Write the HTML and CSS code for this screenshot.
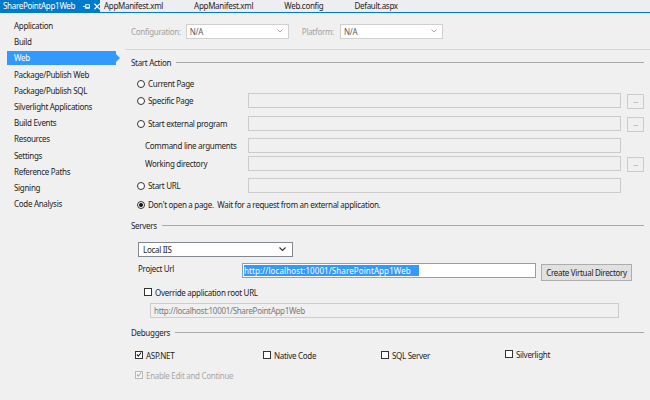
FILE: index.html
```html
<!DOCTYPE html>
<html>
<head>
<meta charset="utf-8">
<link rel="stylesheet" href="styles.css">
</head>
<body>
<div class="tabs">
  <div class="tab active">
    <span>SharePointApp1Web</span>
    <svg class="pin" width="8" height="7" viewBox="0 0 8 7"><path d="M0 3.5h3M3 1v5M3 1.5h4v4H3M3 4.5h4" fill="none" stroke="#fff" stroke-width="1"/></svg>
    <svg class="close" width="7" height="7" viewBox="0 0 7 7"><path d="M0.5 0.5l6 6M6.5 0.5l-6 6" stroke="#fff" stroke-width="1.3"/></svg>
  </div>
  <div class="tab">AppManifest.xml</div>
  <div class="tab">AppManifest.xml</div>
  <div class="tab">Web.config</div>
  <div class="tab">Default.aspx</div>
</div>
<div class="wrap">
  <nav class="side">
    <div class="item">Application</div>
    <div class="item">Build</div>
    <div class="item sel">Web</div>
    <div class="item">Package/Publish Web</div>
    <div class="item">Package/Publish SQL</div>
    <div class="item">Silverlight Applications</div>
    <div class="item">Build Events</div>
    <div class="item">Resources</div>
    <div class="item">Settings</div>
    <div class="item">Reference Paths</div>
    <div class="item">Signing</div>
    <div class="item">Code Analysis</div>
  </nav>
  <main class="main">
    <div class="cfg">
      <span class="dim">Configuration:</span>
      <div class="select cfg-sel"><span>N/A</span><svg width="6" height="4" viewBox="0 0 6 4"><path d="M0.5 0.5l2.5 2.5 2.5-2.5" fill="none" stroke="#a8a8a8"/></svg></div>
      <span class="dim plat">Platform:</span>
      <div class="select cfg-sel"><span>N/A</span><svg width="6" height="4" viewBox="0 0 6 4"><path d="M0.5 0.5l2.5 2.5 2.5-2.5" fill="none" stroke="#a8a8a8"/></svg></div>
    </div>
    <div class="content">
      <div class="head"><span>Start Action</span><i class="rule"></i></div>

      <div class="row mt8"><label class="opt"><i class="radio"></i>Current Page</label></div>
      <div class="row mt2"><label class="opt"><i class="radio"></i>Specific Page</label><div class="box"></div><div class="dots">...</div></div>
      <div class="row mt8"><label class="opt"><i class="radio"></i>Start external program</label><div class="box"></div><div class="dots">...</div></div>
      <div class="row mt7"><label class="sub">Command line arguments</label><div class="box"></div></div>
      <div class="row mt3"><label class="sub">Working directory</label><div class="box"></div><div class="dots">...</div></div>
      <div class="row mt7"><label class="opt"><i class="radio"></i>Start URL</label><div class="box"></div></div>
      <div class="row mt4"><label class="opt wide"><i class="radio on"></i>Don't open a page.&nbsp; Wait for a request from an external application.</label></div>

      <div class="head servers"><span>Servers</span><i class="rule"></i></div>
      <div class="select iis"><span>Local IIS</span><svg width="7" height="5" viewBox="0 0 7 5"><path d="M0.5 0.5l3 3 3-3" fill="none" stroke="#333" stroke-width="1.1"/></svg></div>
      <div class="url-row">
        <label class="url-label">Project Url</label>
        <div class="box live"><span class="selected">http://localhost:10001/SharePointApp1Web</span></div>
        <button class="btn">Create Virtual Directory</button>
      </div>
      <label class="check override"><i class="cb"></i>Override application root URL</label>
      <div class="box root">http://localhost:10001/SharePointApp1Web</div>

      <div class="head debug"><span>Debuggers</span><i class="rule"></i></div>
      <div class="dbg">
        <label class="check"><i class="cb on"><svg width="7" height="7" viewBox="0 0 7 7"><path d="M1 3.5l1.8 1.8L6 1.2" fill="none" stroke="#222" stroke-width="1.3"/></svg></i>ASP.NET</label>
        <label class="check"><i class="cb"></i>Native Code</label>
        <label class="check"><i class="cb"></i>SQL Server</label>
        <label class="check up"><i class="cb"></i>Silverlight</label>
      </div>
      <label class="check disabled edit"><i class="cb on"><svg width="7" height="7" viewBox="0 0 7 7"><path d="M1 3.5l1.8 1.8L6 1.2" fill="none" stroke="#b0b0b0" stroke-width="1.3"/></svg></i>Enable Edit and Continue</label>
    </div>
  </main>
</div>
</body>
</html>
```
FILE: styles.css
```css
* { box-sizing: border-box; }
html, body {
  margin: 0;
  padding: 0;
  width: 650px;
  height: 400px;
  overflow: hidden;
  background: #f0f0f0;
  font-family: "Segoe UI", "Noto Sans", sans-serif;
  font-size: 8px;
  letter-spacing: -0.3px;
  color: #1e1e1e;
}

/* tab strip */
.tabs {
  display: flex;
  height: 13px;
  border-bottom: 1px solid #007acc;
  background: #eeeef2;
}
.tab {
  display: flex;
  align-items: center;
  padding: 0 27px 0 4px;
  height: 12px;
  line-height: 12px;
  color: #1e1e1e;
  white-space: nowrap;
}
.tab.active {
  background: #007acc;
  color: #fff;
  padding: 0 0 0 3px;
  width: 100px;
}
.tab.active .pin { margin-left: 8px; }
.tab.active .close { margin-left: 3px; }

.wrap { display: flex; height: 387px; }

/* sidebar */
.side {
  width: 118px;
  flex: none;
  padding: 5px 0 0 7px;
}
.item {
  height: 16.2px;
  line-height: 16.2px;
  padding-left: 7px;
  width: 109px;
  white-space: nowrap;
  position: relative;
}
.item.sel {
  background: #3399ff;
  color: #fff;
  height: 14px;
  line-height: 14px;
  margin: 1px 0 1.2px;
}
.item.sel::after {
  content: "";
  position: absolute;
  right: -4px;
  top: 3px;
  border-left: 4px solid #3399ff;
  border-top: 4px solid transparent;
  border-bottom: 4px solid transparent;
}

/* main */
.main { flex: 1; }
.cfg {
  display: flex;
  align-items: center;
  height: 37px;
  padding: 11px 0 11px 6px;
  margin-left: 7px;
  border-bottom: 1px solid #d6d6d6;
}
.dim { color: #a2a2a2; margin-right: 5px; }
.plat { margin-left: 13px; margin-right: 6px; }
.select {
  display: flex;
  align-items: center;
  justify-content: space-between;
  height: 15px;
  background: #fff;
  border: 1px solid #cfcfcf;
  padding: 0 5px 0 3px;
}
.cfg-sel { width: 103px; color: #5a5a5a; }

.content { padding: 0 10px 0 13px; }
.head {
  display: flex;
  align-items: center;
  height: 12px;
  margin-top: 6px;
}
.head .rule {
  flex: 1;
  height: 1px;
  background: #a9a9a9;
  margin-left: 5px;
}
.head.servers { margin-top: 7px; }
.head.debug { margin-top: 8px; }

.row {
  display: grid;
  grid-template-columns: 105px 373px 17px;
  column-gap: 6px;
  height: 15px;
  margin-left: 6px;
  align-items: start;
}
.mt2 { margin-top: 2px; }
.mt3 { margin-top: 3px; }
.mt4 { margin-top: 4px; }
.mt7 { margin-top: 7px; }
.mt8 { margin-top: 8px; }

.opt {
  display: flex;
  align-items: center;
  height: 15px;
  white-space: nowrap;
}
.opt.wide { grid-column: 1 / 4; }
.sub {
  display: flex;
  align-items: center;
  height: 15px;
  padding-left: 8px;
  white-space: nowrap;
}
.radio {
  width: 8px;
  height: 8px;
  border: 1px solid #333;
  border-radius: 50%;
  background: #fff;
  margin-right: 3px;
  flex: none;
  position: relative;
}
.radio.on::after {
  content: "";
  position: absolute;
  left: 1px;
  top: 1px;
  width: 4px;
  height: 4px;
  border-radius: 50%;
  background: #111;
}
.box {
  height: 15px;
  border: 1px solid #cccccc;
  background: #f0f0f0;
}
.dots {
  height: 15px;
  margin-top: 1px;
  border: 1px solid #cccccc;
  background: #f0f0f0;
  color: #9a9a9a;
  font-size: 7px;
  text-align: center;
  line-height: 11px;
}

.iis {
  width: 155px;
  margin: 11px 0 0 7px;
  border-color: #828790;
  padding-left: 4px;
  padding-right: 6px;
}
.url-row {
  display: flex;
  align-items: flex-start;
  margin: 6px 0 0 7px;
  height: 18px;
}
.url-label {
  width: 104px;
  line-height: 12px;
}
.box.live {
  width: 294px;
  background: #fff;
  border-color: #7ea3c9;
  padding: 1px 1px;
  display: flex;
  align-items: center;
}
.selected {
  background: #3399ff;
  color: #fff;
  line-height: 11px;
  white-space: nowrap;
  letter-spacing: 0.1px;
  padding-right: 8px;
}
.btn {
  margin: 1px 0 0 5px;
  width: 91px;
  height: 17px;
  padding: 0;
  background: #e1e1e1;
  border: 1px solid #adadad;
  font: inherit;
  letter-spacing: inherit;
  color: #1e1e1e;
}

.check {
  display: flex;
  align-items: center;
  height: 12px;
  white-space: nowrap;
}
.cb {
  width: 8px;
  height: 8px;
  border: 1px solid #333;
  background: #fff;
  margin-right: 3px;
  flex: none;
  display: flex;
  align-items: center;
  justify-content: center;
}
.cb svg { margin-top: -1px; }
.override { margin: 5px 0 0 13px; }
.box.root {
  margin: 5px 25px 0 19px;
  color: #7a7a7a;
  padding-left: 3px;
  line-height: 13px;
}
.dbg {
  display: grid;
  grid-template-columns: 128px 118px 124px auto;
  margin: 11px 0 0 4px;
}
.check.up { margin-top: -1px; }
.check.disabled { color: #a8a8a8; }
.check.disabled .cb { border-color: #b8b8b8; background: #f6f6f6; }
.edit { margin: 8px 0 0 4px; }
```
